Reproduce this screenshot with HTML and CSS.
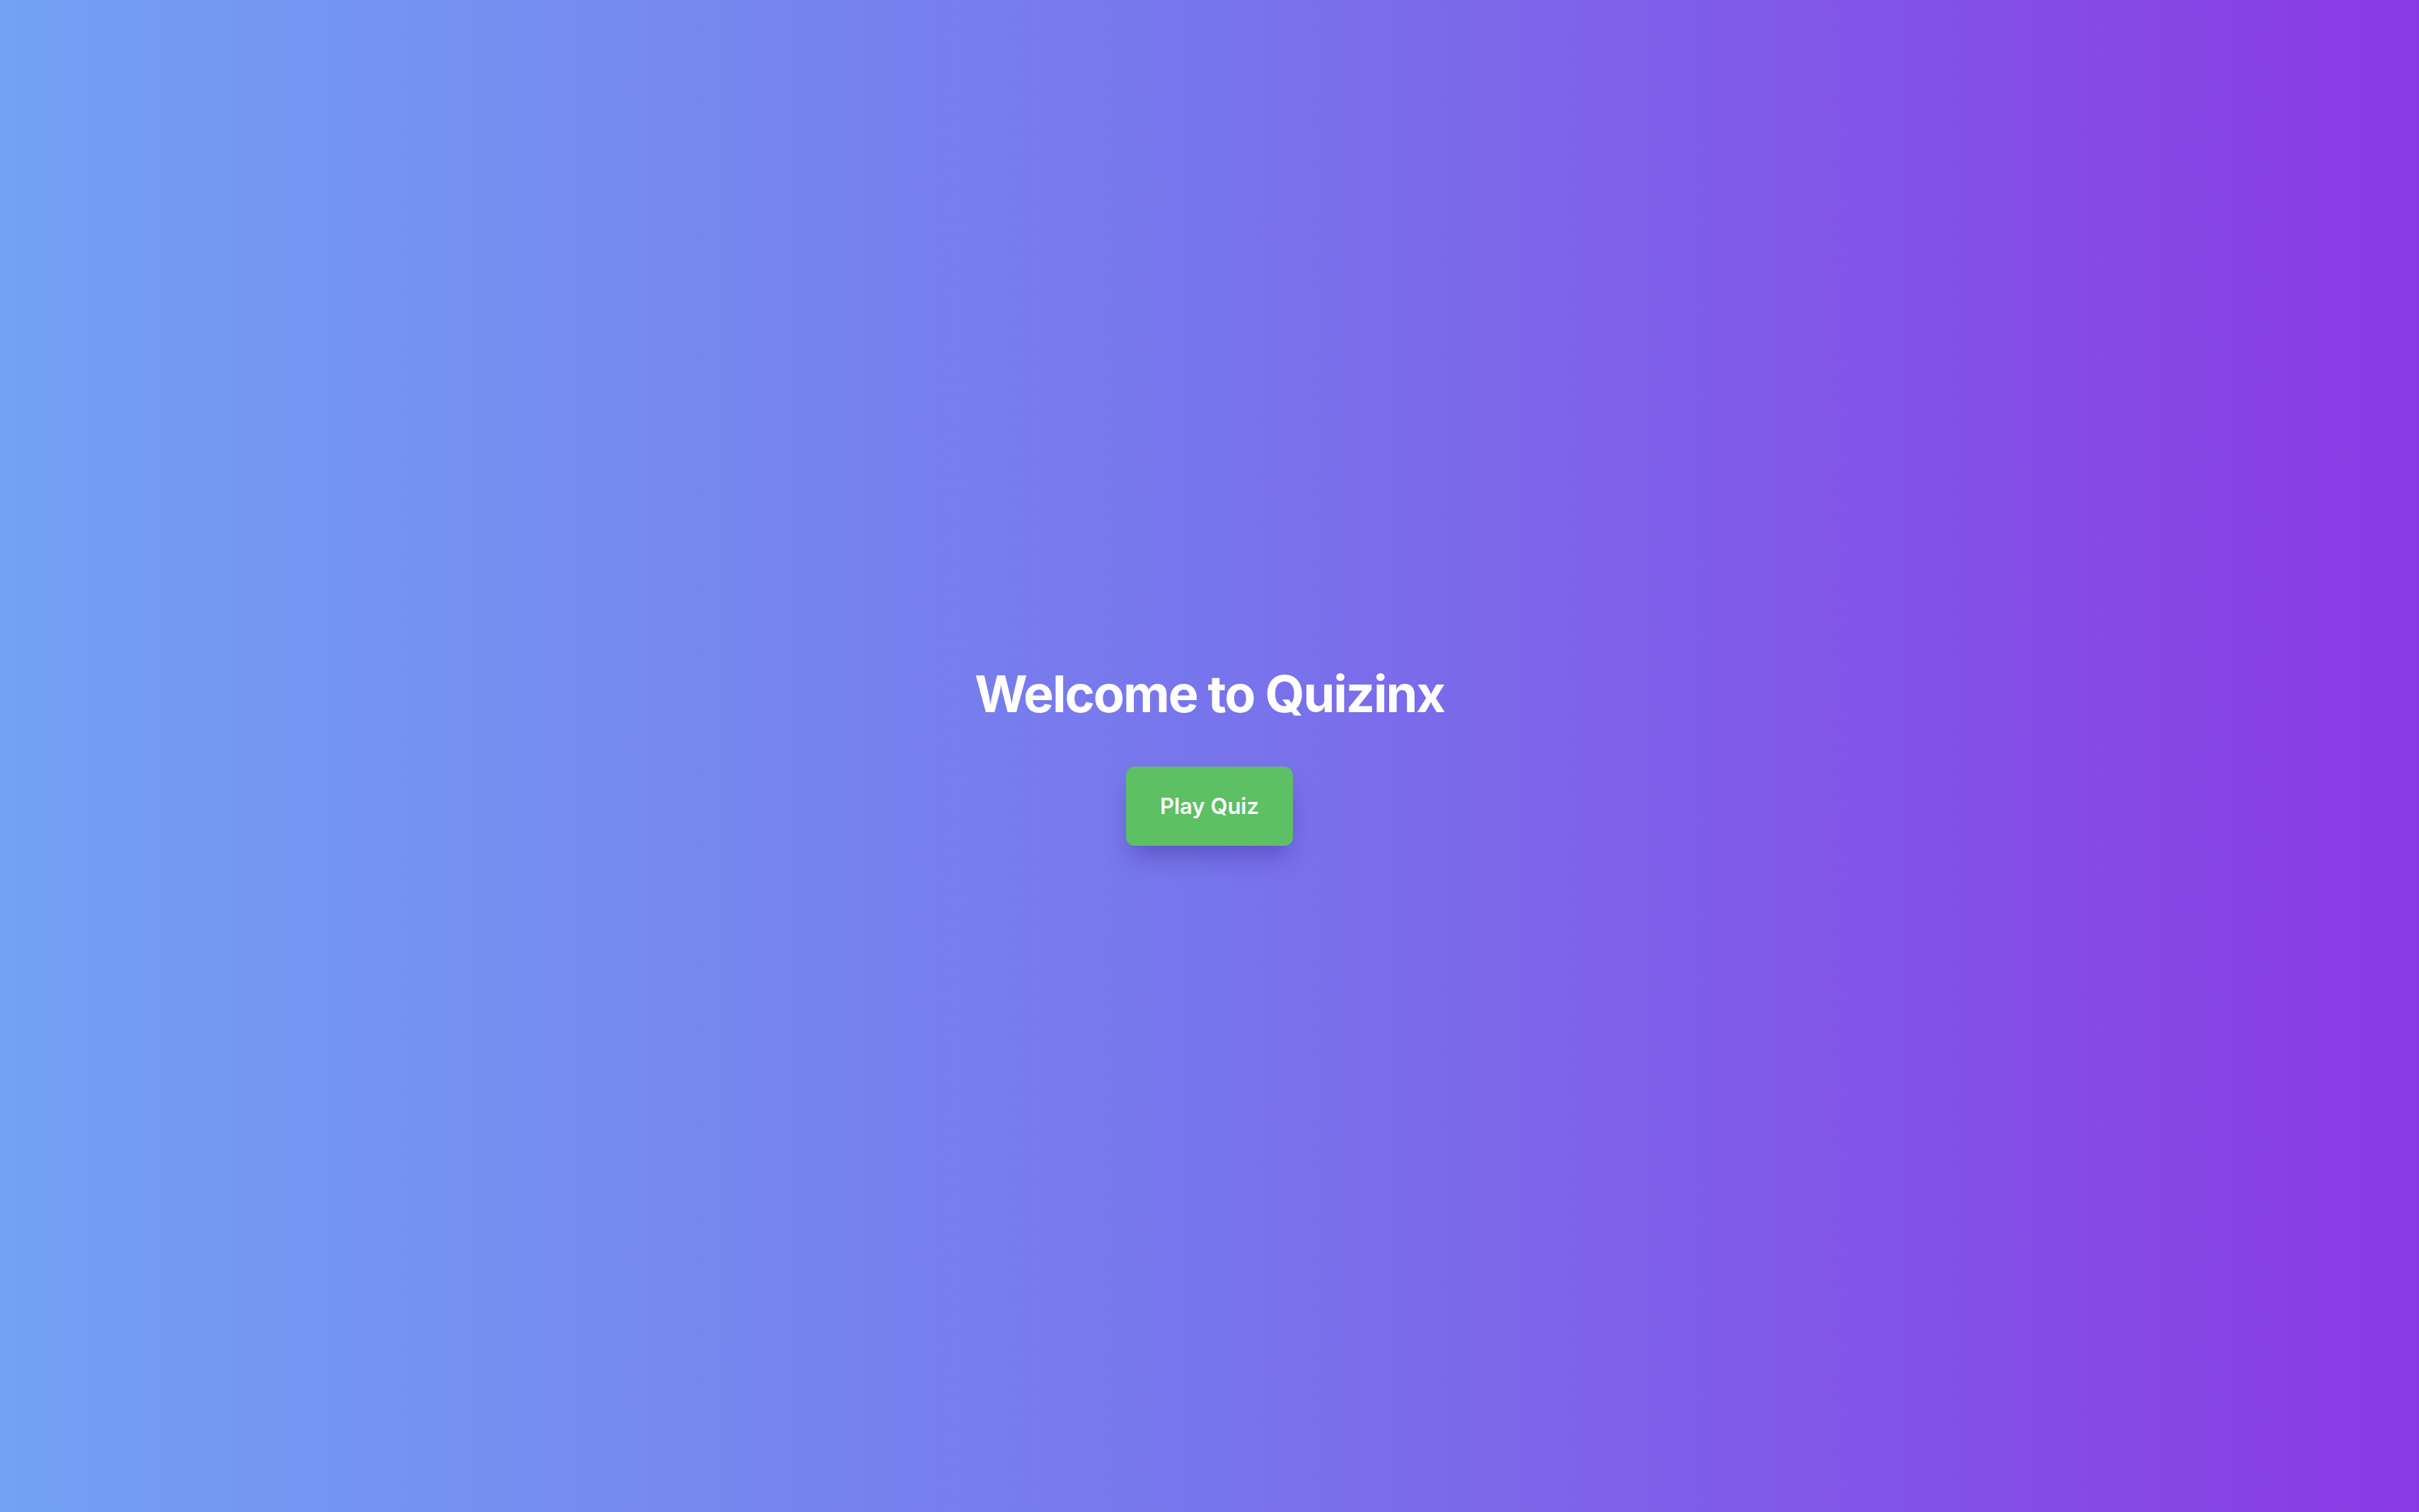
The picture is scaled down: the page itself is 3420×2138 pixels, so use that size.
FILE: index.html
```html
<!DOCTYPE html>
<html lang="en">
<head>
<meta charset="utf-8">
<title>Quizinx</title>
<link rel="stylesheet" href="styles.css">
</head>
<body>
<main class="hero">
  <h1 class="hero-title">Welcome to Quizinx</h1>
  <button class="play-btn" type="button">Play Quiz</button>
</main>
</body>
</html>
```
FILE: styles.css
```css
html, body {
  margin: 0;
  padding: 0;
  height: 100%;
}
body {
  background: linear-gradient(90deg, #73a1f4 0%, #7875ec 50%, #8a3ae4 100%);
  font-family: Inter, "Noto Sans", "Liberation Sans", sans-serif;
}
.hero {
  min-height: 100vh;
  display: flex;
  flex-direction: column;
  align-items: center;
  justify-content: center;
  padding-bottom: 4px;
  box-sizing: border-box;
}
.hero-title {
  margin: 0 0 60px 0;
  font-size: 72px;
  line-height: 86px;
  font-weight: 700;
  color: #ffffff;
  letter-spacing: -2px;
}
.play-btn {
  font-family: inherit;
  font-size: 31px;
  line-height: 48px;
  font-weight: 600;
  color: #ffffff;
  background: #5dc064;
  border: none;
  border-radius: 12px;
  padding: 32px 48px;
  box-shadow: 0 22px 34px -8px rgba(40, 20, 120, 0.35);
  cursor: pointer;
}
```
